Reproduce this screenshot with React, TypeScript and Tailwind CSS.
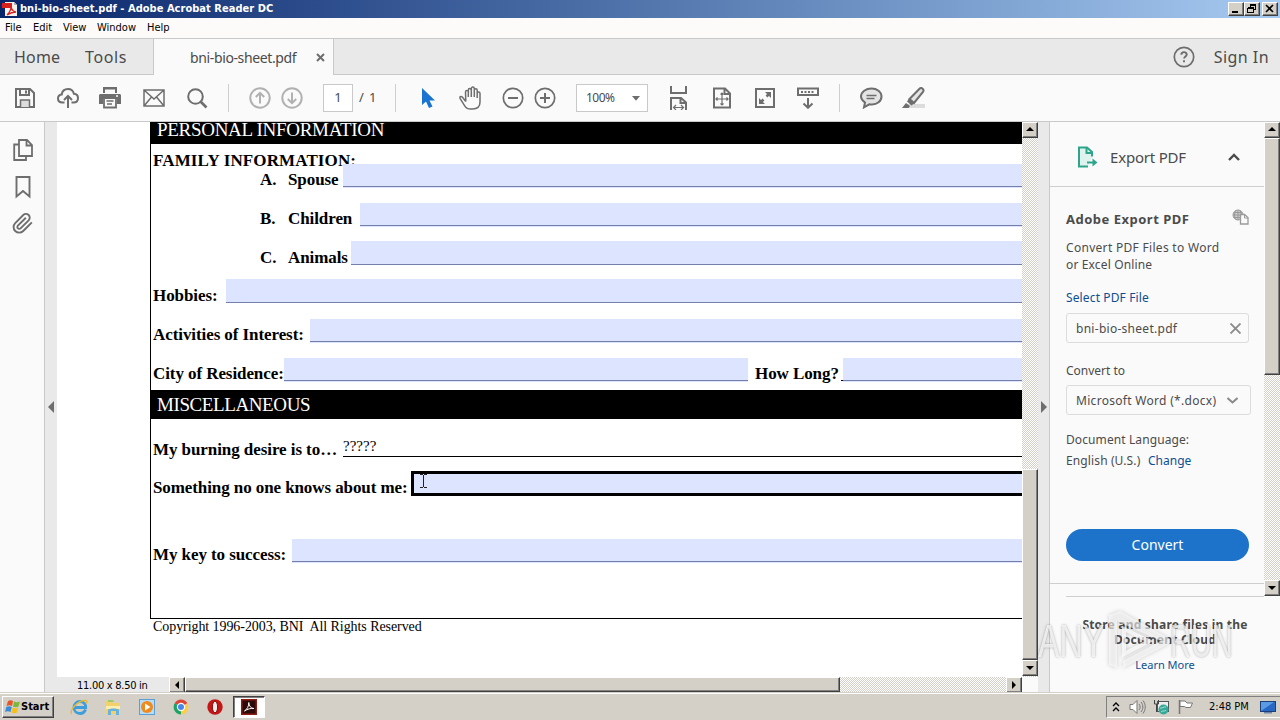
import type { ReactNode } from 'react';

const SERIF = "font-['Liberation_Serif',serif]";
const TAHOMA = "font-['DejaVu_Sans_Condensed','DejaVu_Sans',sans-serif]";

const BEVEL =
  'bg-[#d4d0c8] border border-t-white border-l-white border-r-[#404040] border-b-[#404040] shadow-[inset_-1px_-1px_0_#808080]';
const TRACK =
  'bg-[repeating-conic-gradient(#d4d0c8_0_25%,#ffffff_0_50%)] bg-[length:2px_2px]';

type IconProps = { w: number; h: number; className?: string; children: ReactNode };

function Icon({ w, h, className = '', children }: IconProps) {
  return (
    <svg
      width={w}
      height={h}
      viewBox={`0 0 ${w} ${h}`}
      fill="none"
      stroke="#6e6e6e"
      strokeWidth="2"
      className={`shrink-0 ${className}`}
    >
      {children}
    </svg>
  );
}

function ScrollButton({ dir }: { dir: 'up' | 'down' | 'left' | 'right' }) {
  const points = {
    up: '3,8 11,8 7,4',
    down: '3,5 11,5 7,9',
    left: '9,3 9,11 5,7',
    right: '5,3 5,11 9,7',
  };
  return (
    <div className={`w-4 h-4 shrink-0 flex items-center justify-center ${BEVEL}`}>
      <svg width="14" height="14" viewBox="0 0 14 14">
        <polygon points={points[dir]} fill="#000" />
      </svg>
    </div>
  );
}

function TitleBar() {
  return (
    <div className="h-[18px] shrink-0 flex items-center bg-linear-to-r from-[#0a246a] to-[#a6caf0] pl-[2px] pr-[2px]">
      <svg width="16" height="16" viewBox="0 0 16 16" className="shrink-0">
        <path d="M3 1h9l3 3v11H3z" fill="#f4f1ee" />
        <path d="M12 1v3h3z" fill="#b8b4b0" />
        <rect x="0" y="2" width="10" height="5" fill="#d8201c" />
        <path d="M5 14c2-2 4-5 4-8 1 3 3 5 5 5-3 0-6 1-9 3z" fill="none" stroke="#d8201c" strokeWidth="1.3" />
      </svg>
      <span className="ml-[2px] pt-px text-[11px] font-bold text-white whitespace-nowrap tracking-[0.03px]">
        bni-bio-sheet.pdf - Adobe Acrobat Reader DC
      </span>
      <div className="ml-auto flex">
        <div className={`w-4 h-[14px] ${BEVEL}`}>
          <svg width="14" height="12" viewBox="0 0 14 12">
            <rect x="3" y="8" width="6" height="2" fill="#000" />
          </svg>
        </div>
        <div className={`w-4 h-[14px] ${BEVEL}`}>
          <svg width="14" height="12" viewBox="0 0 14 12" fill="none" stroke="#000" shapeRendering="crispEdges">
            <path d="M5.5 4V1.5h5v5H9M5 2h6M2.5 5v4.5h6v-5h-6M2 5h7" />
          </svg>
        </div>
        <div className={`w-4 h-[14px] ml-[2px] ${BEVEL}`}>
          <svg width="14" height="12" viewBox="0 0 14 12" stroke="#000" strokeWidth="1.6">
            <path d="M3 2l7 7M10 2l-7 7" />
          </svg>
        </div>
      </div>
    </div>
  );
}

function MenuBar() {
  return (
    <div className="h-5 shrink-0 flex items-center bg-[#fdfbfa] text-[11px] text-black pl-[5px] pt-px">
      <span className="w-7">File</span>
      <span className="w-[30px]">Edit</span>
      <span className="w-[34px]">View</span>
      <span className="w-[50px]">Window</span>
      <span>Help</span>
    </div>
  );
}

function TabBar() {
  return (
    <div className="h-[37px] shrink-0 flex border-t border-[#c9c9c9] bg-[#e9e9e9] font-['Noto_Sans',sans-serif] text-[#4b4b4b]">
      <div className="w-[154px] flex items-center border-r border-b border-[#c9c9c9] pl-[14px] text-[16px]">
        <span className="w-[71px] tracking-[0.2px]">Home</span>
        <span className="tracking-[0.6px]">Tools</span>
      </div>
      <div className="w-[179px] flex items-center bg-[#fafafa] pl-9 text-[14px]">
        <span className="w-[126px] whitespace-nowrap tracking-[-0.37px]">bni-bio-sheet.pdf</span>
        <Icon w={9} h={9}>
          <path d="M1 1l7 7M8 1l-7 7" />
        </Icon>
      </div>
      <div className="flex-1 flex items-center justify-end border-l border-b border-[#c9c9c9] pr-[11px]">
        <Icon w={22} h={22} className="mr-[19px]">
          <circle cx="11" cy="11" r="9.700" strokeWidth="1.700" />
          <path d="M8.300 8.800c0-3.600 5.400-3.500 5.400-.4 0 2-2.600 2-2.600 4.200M11 14.200v2" strokeWidth="1.900" />
        </Icon>
        <span className="text-[16px] whitespace-nowrap tracking-[0.45px]">Sign In</span>
      </div>
    </div>
  );
}

function Toolbar() {
  return (
    <div className="h-[47px] shrink-0 flex items-center bg-[#fafafa] border-b border-[#c9c9c9] pl-[15px] font-['Noto_Sans',sans-serif] text-[13px] text-[#4b4b4b]">
      <Icon w={20} h={20}>
        <path d="M1 1h14l4 4v14H1z" />
        <path d="M5 1v6h9V1" />
        <path d="M11 2.500v3" />
        <path d="M5.500 19v-7h9v7" fill="#dcdcdc" strokeWidth="1.500" />
      </Icon>
      <Icon w={22} h={22} className="ml-[22px]">
        <path d="M7.500 15.500H5.500C2.800 15.500 1 13.800 1 11.500c0-2.200 1.500-3.700 3.700-4C5.200 4.200 7.800 2 11 2c3 0 5.300 2 5.900 4.800 2.500.2 4.100 2 4.100 4.200 0 2.600-1.800 4.500-4.500 4.500h-2" />
        <path d="M11 21V9.500M7 13l4-4 4 4" />
      </Icon>
      <Icon w={22} h={22} className="ml-5">
        <path d="M4 0h14v6H4z" fill="#6e6e6e" stroke="none" />
        <path d="M6 2.500h10V6H6z" fill="#fafafa" stroke="none" />
        <path d="M1 7h20l1 1v9h-4v-5H4v5H0V8z" fill="#6e6e6e" stroke="none" />
        <path d="M5 11h12v9.500H5z" fill="#fafafa" strokeWidth="1.800" />
        <path d="M7.500 14h7M8 17h5" strokeWidth="1.300" />
        <path d="M17 9h2" stroke="#fafafa" strokeWidth="1.500" />
      </Icon>
      <Icon w={22} h={18} className="ml-[22px]">
        <path d="M1 1h20v16H1zM1 1l10 9L21 1M1 17l7.500-9M21 17l-7.500-9" strokeWidth="1.500" />
      </Icon>
      <Icon w={21} h={21} className="ml-[22px]">
        <circle cx="8.500" cy="8.500" r="7.300" />
        <path d="M13.500 13.500l6 6" strokeWidth="2.600" />
      </Icon>
      <div className="w-px h-7 bg-[#cfcfcf] ml-5" />
      <Icon w={22} h={22} className="ml-5">
        <circle cx="11" cy="11" r="9.700" stroke="#b1b1b1" />
        <path d="M11 16.500V6M6.800 10L11 5.800l4.200 4.200" stroke="#b1b1b1" />
      </Icon>
      <Icon w={22} h={22} className="ml-[10px]">
        <circle cx="11" cy="11" r="9.700" stroke="#b1b1b1" />
        <path d="M11 5.500V16M6.800 12l4.200 4.200 4.200-4.200" stroke="#b1b1b1" />
      </Icon>
      <div className="w-[30px] h-7 ml-5 bg-white border border-[#c9c9c9] flex items-center justify-center">1</div>
      <span className="ml-[6px] w-9 whitespace-pre tracking-[0.9px]">/ 1</span>
      <div className="w-px h-7 bg-[#cfcfcf]" />
      <Icon w={13} h={21} className="ml-[26px]">
        <path d="M0 0v17l4-3.500 3 6.500 3.500-1.500-3-6H13z" fill="#1a73d0" stroke="none" />
      </Icon>
      <Icon w={23} h={24} className="ml-6">
        <path
          d="M6.800 15.500L3.500 11.200c-1.500-1.600-3.400-.3-2.300 1.400l4.500 7.200c1.300 2.100 3 3.200 6 3.200h1.800c4.500 0 7.500-2.500 7.500-7V7.500c0-2-2.800-2-2.800 0V12M18.200 9V4.300c0-2-2.900-2-2.900 0V11M15.300 5V2.700c0-2.200-3-2.200-3 0V11M12.300 4.300c0-2.300-3-2.300-3 0V11M9.300 6c0-2.200-2.800-2-2.800 0l.3 9.500"
          strokeWidth="1.500"
        />
      </Icon>
      <Icon w={22} h={22} className="ml-5">
        <circle cx="11" cy="11" r="9.700" strokeWidth="1.700" />
        <path d="M6 11h10" />
      </Icon>
      <Icon w={22} h={22} className="ml-[10px]">
        <circle cx="11" cy="11" r="9.700" strokeWidth="1.700" />
        <path d="M6 11h10M11 6v10" />
      </Icon>
      <div className="w-[72px] h-7 ml-5 bg-white border border-[#c9c9c9] flex items-center justify-between pl-[9px] pr-[7px] text-[12px] tracking-[-0.5px]">
        100%
        <svg width="8" height="5" viewBox="0 0 8 5">
          <path d="M0 0h8L4 4.800z" fill="#6e6e6e" />
        </svg>
      </div>
      <Icon w={20} h={24} className="ml-[21px]">
        <path d="M2 0v7h15V0M2 24V12h10l5 4.500V24M11.500 12v5H17" />
        <path d="M5 21.500h9M7 19l-2.500 2.500L7 24M12 19l2.500 2.500L12 24" strokeWidth="1.200" />
      </Icon>
      <Icon w={20} h={22} className="ml-[23px]">
        <path d="M2 1.500h11l5 5v14H2zM12.500 1.500V7H18" />
        <path
          d="M10 6v12M4 12h12M8.500 7.500L10 6l1.500 1.500M8.500 16.500L10 18l1.500-1.500M5.500 10.500L4 12l1.500 1.500M14.500 10.500L16 12l-1.500 1.500"
          strokeWidth="1.200"
        />
      </Icon>
      <Icon w={20} h={20} className="ml-[23px]">
        <path d="M1 1h18v18H1z" />
        <path d="M10 4h6v6zM4 10v6h6z" fill="#6e6e6e" stroke="none" />
        <path d="M11.500 8.500l2-2M8.500 11.500l-2 2" strokeWidth="2.500" />
      </Icon>
      <Icon w={22} h={22} className="ml-[22px]">
        <path d="M1 1.500h20v6.500H1z" />
        <path d="M4 5h14" strokeDasharray="2 1.500" />
        <path d="M11 11v9M6.500 16.500l4.500 4.300 4.500-4.300" />
      </Icon>
      <div className="w-px h-7 bg-[#cfcfcf] ml-5" />
      <Icon w={23} h={22} className="ml-5">
        <path
          d="M11.500 1.500C17 1.500 21.500 4.800 21.500 9.500S17 17.500 12 17.500c-1 0-1.800 0-2.700-.2L4 20.300l1-4.800C2.800 14 1 12.200 1 9.500c0-4.700 5-8 10.500-8z"
          fill="#e4e4e4"
        />
        <path d="M6.500 8.500h10M6.500 11.500h8" strokeWidth="1.300" />
      </Icon>
      <Icon w={24} h={22} className="ml-[19px]">
        <rect x="6" y="17" width="17" height="4" fill="#dcdcdc" stroke="none" />
        <path d="M7.500 12L17.500 1.800c2-2 5.200.8 3.500 3L12 16z" fill="#e4e4e4" />
        <path d="M7 11.500l5.500 4.500-3 2.500-4.500-4z" fill="#6e6e6e" stroke="none" />
        <path d="M4 16l4 3-1.500 2H0z" fill="#6e6e6e" stroke="none" />
      </Icon>
    </div>
  );
}

function NavRail() {
  return (
    <div className="w-[45px] shrink-0 border-r border-[#c9c9c9] bg-[#fafafa] flex flex-col items-center pt-[17px] pl-px">
      <Icon w={20} h={23} className="ml-px">
        <path d="M6 1h8l5 5v11H6zM13.500 1V6.500H19M5.500 5.500H1.200V21H13v-4" strokeWidth="1.800" />
      </Icon>
      <Icon w={16} h={23} className="mt-[14px]">
        <path d="M1.500 1h13v19.500L8 15l-6.500 5.500z" strokeWidth="1.900" />
      </Icon>
      <Icon w={22} h={22} className="mt-[13px]">
        <path
          d="m21.440 11.050-9.190 9.190a6 6 0 0 1-8.490-8.490l8.570-8.570A4 4 0 1 1 18 8.840l-8.590 8.570a2 2 0 0 1-2.830-2.830l8.490-8.480"
          transform="translate(-.3 0) scale(.94)"
          strokeWidth="2"
        />
      </Icon>
    </div>
  );
}

// Highlighted input area with its underline, runs off the right edge by default
function Field({ size = 'flex-1', line = 'pt-[22px]' }: { size?: string; line?: string }) {
  return (
    <div className={`h-6 bg-[#dde4ff] ${size} ${line}`}>
      <div className="h-px bg-[#7580aa]" />
    </div>
  );
}

const LABEL = 'shrink-0 leading-6 pt-[4px] tracking-[-0.08px]';
const LABEL_LOW = 'shrink-0 leading-6 pt-[5px] tracking-[-0.08px]';

function DocumentPage() {
  return (
    <div className={`flex-1 min-w-0 bg-white pl-[93px] overflow-hidden text-black ${SERIF}`}>
      <div className="h-[497px] border-l border-b border-black text-[17px] font-bold whitespace-nowrap">
        <div className="h-[22px] bg-black text-white font-normal text-[19px] leading-4 pl-[6px] tracking-[-0.3px]">
          PERSONAL INFORMATION
        </div>
        <div className="h-5 pl-[2px] pt-[7px] leading-5 tracking-[0.13px]">FAMILY INFORMATION:</div>
        <div className="h-6 flex pl-[109px]">
          <span className={`w-7 ${LABEL}`}>A.</span>
          <span className={`w-[55px] ${LABEL}`}>Spouse</span>
          <Field />
        </div>
        <div className="h-6 flex pl-[109px] mt-[15px]">
          <span className={`w-7 ${LABEL}`}>B.</span>
          <span className={`w-[72px] ${LABEL}`}>Children</span>
          <Field />
        </div>
        <div className="h-6 flex pl-[109px] mt-[14px]">
          <span className={`w-7 ${LABEL_LOW}`}>C.</span>
          <span className={`w-[63px] ${LABEL_LOW}`}>Animals</span>
          <Field line="pt-[23px]" />
        </div>
        <div className="h-6 flex pl-[2px] mt-[14px]">
          <span className={`w-[73px] ${LABEL_LOW}`}>Hobbies:</span>
          <Field line="pt-[23px]" />
        </div>
        <div className="h-6 flex pl-[2px] mt-4">
          <span className={`w-[157px] ${LABEL}`}>Activities of Interest:</span>
          <Field />
        </div>
        <div className="h-6 flex pl-[2px] mt-[15px]">
          <span className={`w-[131px] ${LABEL}`}>City of Residence:</span>
          <Field size="w-[464px]" />
          <span className={`w-[93px] pl-[7px] ${LABEL}`}>How Long?</span>
          <div className="w-[2px] h-[23px] border-b border-black" />
          <Field />
        </div>
        <div className="mt-2 h-[29px] bg-black text-white font-normal text-[19px] leading-[29px] pl-[6px] tracking-[-0.4px]">
          MISCELLANEOUS
        </div>
        <div className="mt-[14px] h-6 pl-[2px] flex">
          <span className="w-[190px] shrink-0 leading-6 pt-[5px] tracking-[-0.07px]">My burning desire is to…</span>
          <div className="flex-1 border-b border-black font-normal text-[15px] leading-[27px]">?????</div>
        </div>
        <div className="mt-[14px] h-[25px] pl-[2px] flex">
          <span className="w-[258px] shrink-0 leading-6 pt-[5px] tracking-[-0.09px]">
            Something no one knows about me:
          </span>
          <div className="flex-1 border-[3px] border-r-0 border-black bg-[#dde4ff] pl-[5px]">
            <svg width="9" height="15" viewBox="0 0 9 15" fill="none" stroke="#222" shapeRendering="crispEdges">
              <path d="M1 .5h2.500M5 .5h2.500M4.500 1v12M1 13.500h2.500M5 13.500h2.500" />
            </svg>
          </div>
        </div>
        <div className="h-6 flex pl-[2px] mt-[43px]">
          <span className={`w-[139px] ${LABEL}`}>My key to success:</span>
          <Field />
        </div>
      </div>
      <div className="pl-[3px] text-[14px] leading-4 whitespace-pre tracking-[-0.07px]">
        Copyright 1996-2003, BNI  All Rights Reserved
      </div>
    </div>
  );
}

function DocumentView() {
  return (
    <div className="w-[981px] shrink-0 flex flex-col">
      <div className="h-[555px] flex">
        <DocumentPage />
        <div className={`w-4 flex flex-col ${TRACK}`}>
          <ScrollButton dir="up" />
          <div className={`mt-[331px] h-[191px] ${BEVEL}`} />
          <ScrollButton dir="down" />
        </div>
      </div>
      <div className={`h-[15px] flex bg-[#e9e9e9] text-[11px] ${TAHOMA}`}>
        <div className="w-[112px] pl-5 pt-px leading-[15px] text-black tracking-[-0.27px]">11.00 x 8.50 in</div>
        <div className={`w-[853px] flex overflow-hidden ${TRACK}`}>
          <ScrollButton dir="left" />
          <div className={`w-[655px] ${BEVEL}`} />
          <div className="ml-auto">
            <ScrollButton dir="right" />
          </div>
        </div>
        <div className="flex-1 bg-[#fafafa]" />
      </div>
    </div>
  );
}

function ToolsPane() {
  return (
    <div className="flex-1 min-w-0 flex flex-col border-l border-[#c9c9c9] bg-[#fafafa] font-['Noto_Sans',sans-serif] text-[#4b4b4b]">
      <div className="h-[474px] flex">
        <div className="w-[214px] h-[462px] border-b border-[#cfcfcf] text-[12px]">
          <div className="h-[65px] border-b border-[#cfcfcf] flex items-center pl-[27px] pt-[5px]">
            <Icon w={21} h={22}>
              <path d="M15 10.500V6l-5-4.500H2v19h9" fill="#e0f2ed" stroke="#2ea58a" />
              <path d="M9.500 1.500V7H15" stroke="#2ea58a" />
              <path d="M10 16.500h8" stroke="#2ea58a" />
              <path d="M15.500 12.500l5 4-5 4z" fill="#2ea58a" stroke="none" />
            </Icon>
            <span className="ml-3 w-[118px] pt-px text-[15px] tracking-[-0.2px]">Export PDF</span>
            <Icon w={12} h={8}>
              <path d="M1 7l5-5 5 5" stroke="#4b4b4b" strokeWidth="2.400" />
            </Icon>
          </div>
          <div className="pl-4 pr-[15px] flex flex-col">
            <div className="mt-[22px] h-5 flex justify-between">
              <span className="text-[13px] leading-5 font-bold tracking-[0.5px]">Adobe Export PDF</span>
              <Icon w={17} h={16}>
                <g stroke="#9a9a9a" strokeWidth="1">
                  <circle cx="6" cy="6" r="5" fill="#ccc" />
                  <path d="M6 1v10M1 6h10M2 3.500h8M2 8.500h8M4 1.500c-2 3-2 6 0 9M8 1.500c2 3 2 6 0 9" />
                  <path d="M8.500 5.500h4l3.500 3v6.500H8.500z" fill="#fafafa" strokeWidth="1.300" />
                  <path d="M12.500 5.500v3.500H16" />
                </g>
              </Icon>
            </div>
            <div className="mt-[10px] leading-[17px] whitespace-nowrap">
              <span className="tracking-[0.3px]">Convert PDF Files to Word</span>
              <br />
              <span className="tracking-[0.15px]">or Excel Online</span>
            </div>
            <div className="mt-4 leading-[17px] text-[#0d4f94] tracking-[0.13px]">Select PDF File</div>
            <div className="mt-[7px] w-[183px] h-[30px] rounded-[3px] border border-[#dcdcdc] flex items-center justify-between pl-[9px] pr-[7px]">
              <span className="pt-px tracking-[0.28px]">bni-bio-sheet.pdf</span>
              <Icon w={11} h={11}>
                <path d="M.5.5l10 10M10.500.5l-10 10" stroke="#8a8a8a" strokeWidth="1.800" />
              </Icon>
            </div>
            <div className="mt-[19px] leading-[17px]">Convert to</div>
            <div className="mt-[6px] w-[185px] h-[30px] rounded-[3px] border border-[#dcdcdc] flex items-center justify-between pl-[9px] pr-3 whitespace-nowrap">
              <span className="pt-[2px] tracking-[0.3px]">Microsoft Word (*.docx)</span>
              <Icon w={11} h={7}>
                <path d="M.5 1l5 4.500 5-4.500" stroke="#8a8a8a" />
              </Icon>
            </div>
            <div className="mt-4 leading-[17px] tracking-[0.1px]">Document Language:</div>
            <div className="mt-1 leading-[17px] flex">
              <span className="w-[82px] tracking-[0.12px]">English (U.S.)</span>
              <span className="text-[#0d4f94]">Change</span>
            </div>
            <div className="mt-[60px] w-[183px] h-8 pb-[2px] rounded-full bg-[#1d73c9] text-white text-[14px] flex items-center justify-center">
              Convert
            </div>
          </div>
        </div>
        <div className={`w-4 flex flex-col ${TRACK}`}>
          <ScrollButton dir="up" />
          <div className={`h-[237px] ${BEVEL}`} />
          <div className="mt-auto">
            <ScrollButton dir="down" />
          </div>
        </div>
      </div>
      <div className="relative flex-1 text-center text-[12px]">
        <div className="ml-4 mr-4 h-px bg-[#cfcfcf]" />
        <div className="mt-5 font-bold leading-[15px] whitespace-nowrap tracking-[0.2px]">
          Store and share files in the
          <br />
          Document Cloud
        </div>
        <div className="mt-[10px] text-[11px] leading-4 text-[#0d4f94]">Learn More</div>
        <Watermark />
      </div>
    </div>
  );
}

function Watermark() {
  return (
    <div className="absolute left-[-12px] top-[13px] flex items-center text-[46px] leading-[64px] text-white/75 font-['Liberation_Sans',sans-serif] [text-shadow:0_0_3px_rgba(0,0,0,0.35)]">
      <span className="w-[66px] flex">
        <span className="origin-left scale-x-[0.7]">ANY</span>
      </span>
      <svg width="66" height="64" viewBox="0 0 66 64" className="shrink-0 drop-shadow-[0_0_2px_rgba(0,0,0,0.3)]">
        <path d="M5 6v50l8 3V12l44 20-38 20v7l47-25v-4L16 2z" fill="#fff" fillOpacity=".6" />
        <path d="M20 20l25 12-25 13z" fill="none" stroke="#fff" strokeOpacity=".7" strokeWidth="4" />
      </svg>
      <span className="w-[62px] flex">
        <span className="origin-left scale-x-[0.63]">RUN</span>
      </span>
    </div>
  );
}

function Taskbar() {
  return (
    <div className="h-7 shrink-0 flex items-center bg-[#d4d0c8] border-t border-[#d4d0c8] shadow-[inset_0_1px_0_#fff] pl-[2px] pt-px">
      <div className={`w-[52px] h-[22px] flex items-center pl-[2px] text-[11px] font-bold text-black ${BEVEL}`}>
        <svg width="16" height="16" viewBox="0 0 16 16" className="shrink-0">
          <path d="M3 2c2-1 3.500-1 5 0L7 7C5 6 3.500 6 1.500 7z" fill="#e8542a" />
          <path d="M9 2.500c2 1 4 1 6 0L13.500 7.500c-2 1-3.500 1-5.500 0z" fill="#7ab83a" />
          <path d="M1.300 8c2-1 3.500-1 5.500 0L5.500 13c-2-1-3.500-1-5.500 0z" fill="#3a8ad8" />
          <path d="M7.700 8.500c2 1 3.500 1 5.500 0L12 13.500c-2 1-3.500 1-5.500 0z" fill="#f4c020" />
        </svg>
        Start
      </div>
      <svg width="18" height="18" viewBox="0 0 18 18" fill="none" className="ml-4 shrink-0">
        <path d="M15.500 11.500c-1 3-3 4-5.500 4-3.500 0-6-2.500-6-6s2.500-6 6-6 5.700 2.500 5.700 6H5" stroke="#3e9edb" strokeWidth="2.800" />
        <path d="M1.500 16C-.5 12 8 2 16 2.500c1.500.5 1 2 0 3" stroke="#e5b93a" strokeWidth="1.400" />
      </svg>
      <svg width="18" height="18" viewBox="0 0 18 18" className="ml-4 shrink-0">
        <path d="M2 3h6l1 2h6v11H2z" fill="#f2d06b" />
        <path d="M4 2h5l1 2H4z" fill="#9dcb68" />
        <path d="M2 8h14v3H2z" fill="#fbeeb0" />
        <path d="M4 17v-5c0-2 11-2 11 0v5h-3v-4H7v4z" fill="#68b2df" />
      </svg>
      <svg width="18" height="18" viewBox="0 0 18 18" className="ml-4 shrink-0">
        <rect x="1.500" y="1.500" width="15" height="15" fill="#b7dcf5" stroke="#5c9fd2" />
        <circle cx="9" cy="9" r="6" fill="#f08a1c" />
        <path d="M7 5.500v7l5.500-3.500z" fill="#fff" />
      </svg>
      <svg width="18" height="18" viewBox="0 0 18 18" className="ml-4 shrink-0">
        <path d="M9 9L2.600 5.300A7.400 7.400 0 0 1 15.400 5.300z" fill="#dc4437" />
        <path d="M9 9L9 16.400A7.400 7.400 0 0 1 2.600 5.300z" fill="#1da362" />
        <path d="M9 9l6.400-3.700A7.400 7.400 0 0 1 9 16.400z" fill="#ffcd41" />
        <circle cx="9" cy="9" r="3.600" fill="#4a86e8" stroke="#fff" strokeWidth="1.200" />
      </svg>
      <svg width="18" height="18" viewBox="0 0 18 18" className="ml-4 shrink-0">
        <circle cx="9" cy="9" r="7.700" fill="#c41616" />
        <ellipse cx="9" cy="9" rx="2.600" ry="5.800" fill="#eee" stroke="#8b0c0c" />
      </svg>
      <div className="ml-[9px] w-8 h-[22px] bg-white border border-t-[#404040] border-l-[#404040] border-r-white border-b-white shadow-[inset_1px_1px_0_#808080] flex items-center justify-center">
        <svg width="16" height="16" viewBox="0 0 16 16">
          <rect width="16" height="16" fill="#8e1a12" />
          <rect x="1.500" y="1.500" width="13" height="13" fill="#2b0a08" />
          <path d="M3.500 12c2.500-1.500 4.500-5 4.300-8.500C8 7 10 9.500 13 9.500c-3-.5-6.500.5-9.500 2.500z" fill="none" stroke="#fff" />
        </svg>
      </div>
      <div className="ml-auto w-[174px] h-[22px] flex items-center border-t border-l border-[#808080] border-b border-b-white text-[11px] text-black">
        <svg width="8" height="10" viewBox="0 0 8 10" fill="none" stroke="#000" strokeWidth="1.300" className="ml-[5px] shrink-0">
          <path d="M1 4l3-3 3 3M1 9l3-3 3 3" />
        </svg>
        <svg width="17" height="16" viewBox="0 0 17 16" fill="none" stroke="#777" className="ml-[9px] shrink-0">
          <path d="M1 5.500h3l4-4v13l-4-4H1z" fill="#fff" />
          <path d="M10 5c1.500 2 1.500 4 0 6M12 3c2.500 3 2.500 7 0 10M14 1.500c3 4 3 9 0 13" />
        </svg>
        <svg width="17" height="17" viewBox="0 0 17 17" className="ml-[7px] shrink-0">
          <rect x="4.500" y="2.500" width="11" height="10" fill="#eee" stroke="#555" />
          <path d="M1.500 1v4h4V1M3.500 5v8" fill="none" stroke="#444" />
          <circle cx="10.500" cy="10.500" r="5" fill="#35a89a" />
          <path d="M7 9c2 1 4-2 6-1M8 13c2-2 4 0 5-2" stroke="#a6e3cf" fill="none" />
        </svg>
        <svg width="17" height="16" viewBox="0 0 17 16" className="ml-[7px] shrink-0">
          <path d="M2.500 1v14" stroke="#777" strokeWidth="1.500" />
          <path d="M3 2h5l2 2h5.500l-2 4.500H9L7.500 7.500H3z" fill="#fff" stroke="#777" />
        </svg>
        <span className="ml-[15px] w-[51px] pt-px whitespace-nowrap">2:48 PM</span>
        <svg width="16" height="14" viewBox="0 0 16 14" className="shrink-0">
          <rect x=".5" y="1.500" width="15" height="10" fill="#2668c4" stroke="#1c3f78" />
          <path d="M1 11L14 2H1z" fill="#5b9be6" />
          <rect x="4" y="12" width="8" height="1.500" fill="#6d86a8" />
        </svg>
      </div>
    </div>
  );
}

export default function App() {
  return (
    <div className={`w-[1280px] h-[720px] flex flex-col overflow-hidden bg-[#fafafa] ${TAHOMA}`}>
      <TitleBar />
      <MenuBar />
      <TabBar />
      <Toolbar />
      <div className="h-[570px] shrink-0 flex">
        <NavRail />
        <div className="w-3 shrink-0 bg-[#e9e9e9] flex items-center pl-[3px]">
          <svg width="6" height="12" viewBox="0 0 6 12">
            <path d="M6 0v12L0 6z" fill="#6e6e6e" />
          </svg>
        </div>
        <DocumentView />
        <div className="w-[11px] shrink-0 bg-[#e9e9e9] flex items-center pl-[3px]">
          <svg width="6" height="12" viewBox="0 0 6 12">
            <path d="M0 0v12l6-6z" fill="#6e6e6e" />
          </svg>
        </div>
        <ToolsPane />
      </div>
      <Taskbar />
    </div>
  );
}
